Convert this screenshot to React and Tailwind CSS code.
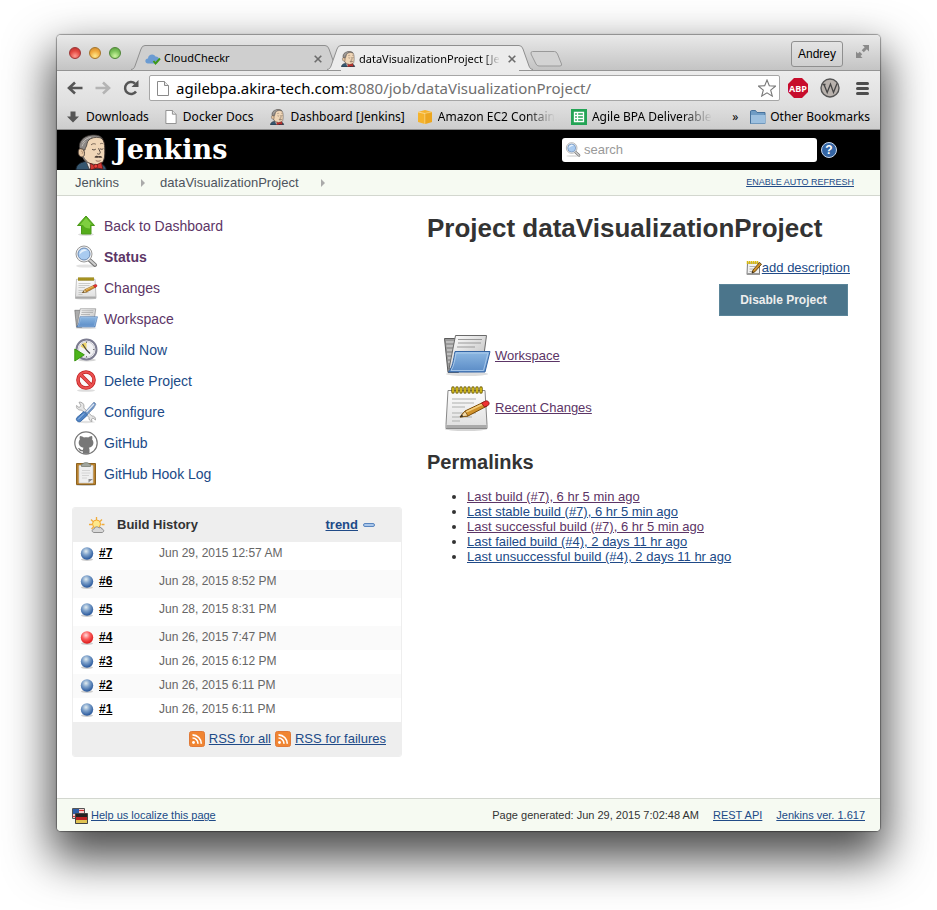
import React from 'react';

const linkBlue = 'text-[#204a87] underline';
const linkVisited = 'text-[#5c3566] underline';

function JenkinsHead({ className }) {
  return (
    <svg viewBox="0 0 36 38" className={className} aria-hidden="true">
      <path d="M1 38c0-5 4-8 10-9l13 1c5 1 9 4 9 8z" fill="#35566f" stroke="#141c24" strokeWidth="1" />
      <path d="M11 27l4 10 8-1 2-7z" fill="#f4f1ec" stroke="#3a2f2a" strokeWidth=".7" />
      <path d="M7 21C5 12 10 1.500 20 1.500c9 0 11.500 6 11.500 13 0 4 .5 9-1 13-1.500 4.500-6 5.500-11 4.500-7-1.500-11-4-12.500-11z" fill="#f0d6b7" stroke="#3a2f2a" strokeWidth="1" />
      <path d="M5 16C3 8 9 2 17 1.200c5-.6 10 .3 12.500 3.800-4-2-9-2-13 0-3 1.500-3.500 4-4 6.500-.3 2-1.500 2.500-2 5.500z" fill="#8b8785" stroke="#3b3532" strokeWidth=".8" />
      <path d="M8 9c2-3 5-5 9-5.500M7.500 13c1-3 2-4 3.500-5" fill="none" stroke="#c4bfbb" strokeWidth="1" />
      <path d="M6 15.500c-3.500-.5-3.500 7 0 8.500 3 1 4-1 4-3.500s-1-5-4-5z" fill="#e8c8a4" stroke="#3a2f2a" strokeWidth=".9" />
      <path d="M6.500 18c1.500 0 2 1.500 1 3" fill="none" stroke="#9b7b60" strokeWidth=".7" />
      <path d="M8.500 24c1 2.500 2.500 4.500 4.500 5.500" fill="none" stroke="#77716d" strokeWidth="1.600" />
      <path d="M17 11.500c1.500-1.500 3.500-1.500 5-.8M26.500 10.500c1-.8 2.500-.8 3.500 0" fill="none" stroke="#6e5d50" strokeWidth="1" />
      <path d="M18 16c1 1 3 1 4 0M26.500 15.500c1 .8 2.500.8 3.500 0M25 15c.5 2.500 2.500 4 1.500 5.500-.8 1-2 1-3 .2" fill="none" stroke="#3a2f2a" strokeWidth=".9" />
      <path d="M20.500 24.500c1.500-1.800 3-1.800 4.500-1 1.500-.6 3 0 4 1.200-1.500.6-3 .5-4 .1-1.500.6-3 .6-4.500-.3z" fill="#4a3c34" />
      <path d="M22 28c1.500 1 3.500 1 5 0" fill="none" stroke="#8b5a4b" strokeWidth=".9" />
      <path d="M16 31l5 2.500 7-3.500 1.500 7-6.500-1-6.500 2z" fill="#d33833" stroke="#5a1210" strokeWidth=".8" />
      <circle cx="22" cy="34" r="2" fill="#ef3d3a" stroke="#5a1210" strokeWidth=".6" />
    </svg>
  );
}

function PageIcon({ className }) {
  return (
    <svg viewBox="0 0 12 15" className={className} aria-hidden="true">
      <path d="M.5.5h7l4 4v10H.5z" fill="#fff" stroke="#8a8a8a" />
      <path d="M7.5.5v4h4" fill="#e8e8e8" stroke="#8a8a8a" />
    </svg>
  );
}

function Magnifier({ className }) {
  return (
    <svg viewBox="0 0 24 24" className={className} aria-hidden="true">
      <ellipse cx="12" cy="21" rx="10" ry="1.600" fill="#e2e2e2" />
      <path d="M15 14.500l6 5.500" stroke="#777" strokeWidth="4" strokeLinecap="round" />
      <path d="M16 15.300l5 4.500" stroke="#cfcfcf" strokeWidth="2" strokeLinecap="round" />
      <circle cx="10" cy="9" r="8" fill="#f2f2f2" stroke="#999" />
      <circle cx="10" cy="9" r="6" fill="#a9cbf0" stroke="#6b8bb5" />
      <path d="M5.500 9.500c0-4.500 5-7 7.500-4-3 .5-5.500 1.500-7.500 4z" fill="#e6f1fc" />
    </svg>
  );
}

function Notepad({ className }) {
  return (
    <svg viewBox="0 0 48 48" className={className} aria-hidden="true">
      <defs>
        <linearGradient id="paper" x1="0" y1="0" x2="0" y2="1">
          <stop offset="0" stopColor="#fdfdfd" />
          <stop offset="1" stopColor="#dedede" />
        </linearGradient>
      </defs>
      <ellipse cx="23" cy="45" rx="21" ry="2" fill="#d5d5d5" />
      <path d="M5 6.500h37l2 34v4H3v-4z" fill="url(#paper)" stroke="#888" strokeLinejoin="round" />
      <path d="M3.500 41h40v3h-40z" fill="#aaa" />
      <path d="M9 15h24M9 19h22M9 23h13M9 29h24M9 33h20M9 37h8" stroke="#aeb0ad" strokeWidth="1.200" />
      <path d="M10 4v4M14 4v4M18 4v4M22 4v4M26 4v4M30 4v4M34 4v4M38 4v4" stroke="#6b5a00" strokeWidth="3.400" strokeLinecap="round" />
      <path d="M10 4v4M14 4v4M18 4v4M22 4v4M26 4v4M30 4v4M34 4v4M38 4v4" stroke="#e3c81c" strokeWidth="1.600" strokeLinecap="round" />
      <path d="M17 33l5-6 19-9 3 4-19 10z" fill="#d0922b" stroke="#7a4b06" strokeLinejoin="round" />
      <path d="M23 28l19-9" stroke="#f4cf7e" strokeWidth="1.400" />
      <path d="M17 33l5-6 3 5z" fill="#f1d9a8" stroke="#7a4b06" strokeWidth=".8" />
      <path d="M17 33l2-2.500 1.200 2z" fill="#222" />
      <path d="M38.500 19l4-2c3-1 5 3 2.500 4.500L41.500 23z" fill="#e33" stroke="#811" strokeWidth=".8" />
    </svg>
  );
}

function EditNote() {
  return (
    <svg viewBox="0 0 16 16" className="size-4" aria-hidden="true">
      <path d="M1.500 3h12v11.500H1z" fill="#f1f1f1" stroke="#7d7d7d" />
      <path d="M1 13h12.500v2H1z" fill="#999" />
      <path d="M3.500 6.500h6M3.500 9h4M3.500 11.500h3" stroke="#b0b0b0" />
      <path d="M1.500 1v3M3.500 1v3M5.500 1v3M7.500 1v3M9.500 1v3M11.500 1v3" stroke="#d8ba10" strokeWidth="1.500" />
      <path d="M6 13l1-3 6.500-7.500 2 1.700L9 11.700z" fill="#d0922b" stroke="#5e3c08" strokeWidth=".9" strokeLinejoin="round" />
      <path d="M6 13l.6-1.800 1.200 1z" fill="#222" />
    </svg>
  );
}

function FolderOpen({ className }) {
  return (
    <svg viewBox="0 0 48 48" className={className} aria-hidden="true">
      <defs>
        <linearGradient id="folderFront" x1="0" y1="0" x2="0" y2="1">
          <stop offset="0" stopColor="#8db8e2" />
          <stop offset="1" stopColor="#5a8bc6" />
        </linearGradient>
        <linearGradient id="sheet" x1="0" y1="0" x2="1" y2="1">
          <stop offset="0" stopColor="#fff" />
          <stop offset="1" stopColor="#b8b8b8" />
        </linearGradient>
      </defs>
      <ellipse cx="24" cy="42" rx="21" ry="2" fill="#ddd" />
      <path d="M1.500 6.500h11l3 3v31H5z" fill="#9a9a9a" stroke="#5c5c5c" />
      <path d="M3 10h9M3.500 14h9M4 18h9M4 22h9M5 26h8M5 30h7" stroke="#c9c9c9" strokeWidth="1.500" />
      <path d="M12.500 3.500h31L40 30 6 37z" fill="url(#sheet)" stroke="#6a6a6a" strokeLinejoin="round" />
      <path d="M15 7.500h24M15 11h23M14 15h18" stroke="#999" strokeWidth="1.200" />
      <path d="M12 19.500h35L42 40H5.500c4-4 5-12 6.500-20.500z" fill="url(#folderFront)" stroke="#3465a4" strokeLinejoin="round" />
      <path d="M13 21h32l-4.500 17.500H8c3-5 4-11 5-17.500z" fill="none" stroke="#b5d2ef" strokeWidth=".8" />
    </svg>
  );
}

function UpArrow() {
  return (
    <svg viewBox="0 0 24 24" className="size-6" aria-hidden="true">
      <ellipse cx="12" cy="20.500" rx="8" ry="1.500" fill="#ddd" />
      <path d="M12 2l8.500 9.500H17v8.500H7.500v-8.500h-4z" fill="#56ad1c" stroke="#4c9a1a" strokeLinejoin="round" />
      <path d="M12 3.800l6 6.700h-2v4c-3 0-6-1-7-3.500H5.800z" fill="#7fce40" />
    </svg>
  );
}

function ClockPlay() {
  return (
    <svg viewBox="0 0 24 24" className="size-6" aria-hidden="true">
      <ellipse cx="13" cy="22" rx="9" ry="1.500" fill="#d5d5d5" />
      <circle cx="12.500" cy="11.500" r="10" fill="#fff" stroke="#7c7c90" strokeWidth="2" />
      <circle cx="12.500" cy="11.500" r="8" fill="#f2f2f4" stroke="#c9c9d2" />
      <path d="M12.500 12V4.500c-3 0-5 1.500-6 4z" fill="#edd46a" />
      <path d="M12.500 12L8.500 6M12.500 12l3.500 3.500" stroke="#444" strokeWidth="1.200" />
      <path d="M12.500 3.500v1.500M20.500 11.500H19M12.500 18v1.500" stroke="#777" />
      <path d="M.8 11l9.500 5.800L.8 23z" fill="#4db51a" stroke="#3a9410" strokeLinejoin="round" />
    </svg>
  );
}

function NoEntry() {
  return (
    <svg viewBox="0 0 24 24" className="size-6" aria-hidden="true">
      <ellipse cx="12" cy="21.500" rx="9" ry="1.300" fill="#ddd" />
      <circle cx="12" cy="11" r="8" fill="#fafafa" stroke="#c02020" strokeWidth="3.600" />
      <path d="M6.500 5.500l11 11" stroke="#c02020" strokeWidth="3.600" />
      <circle cx="12" cy="11" r="8" fill="none" stroke="#ea5050" strokeWidth="2.200" />
      <path d="M6.500 5.500l11 11" stroke="#ea5050" strokeWidth="2.200" />
    </svg>
  );
}

function Tools() {
  return (
    <svg viewBox="0 0 24 24" className="size-6" aria-hidden="true">
      <ellipse cx="12" cy="22" rx="9" ry="1.200" fill="#e2e2e2" />
      <path d="M5 2.200c2.500-.5 5 1.300 5 3.800L9.800 8l8 8c2.200-.3 4.200 1.500 3.700 4L19 18l-1.500 1 .5 2.500c-2.300-.3-3.300-2.200-3-4L7.500 10C4.500 10.500 2 8.500 2.500 5.500L5 7.500 7 5.800z" fill="#e6e6e6" stroke="#9a9a9a" strokeWidth=".8" strokeLinejoin="round" />
      <path d="M20 2l2 2-2.500 4.500-6 6-2.500-2.500 5.500-6z" fill="#6c93c6" stroke="#8097b5" strokeWidth=".8" />
      <path d="M20 4l-7.500 8" stroke="#dfe7f2" strokeWidth="1.200" />
      <path d="M10 11.500l3.500 3.500-7 6.500c-2.500 1-5.500-1.500-3.500-4z" fill="#4f83c4" stroke="#3768a6" strokeLinejoin="round" />
      <path d="M10 13.500l-6 6" stroke="#a5c5ea" />
    </svg>
  );
}

function Octocat() {
  return (
    <svg viewBox="0 0 24 24" className="size-6" aria-hidden="true">
      <circle cx="12" cy="12" r="11.200" fill="#fff" stroke="#777" strokeWidth="1.200" />
      <path d="M6 5c1.700 0 3 .8 4 1.500 1.300-.3 2.900-.3 4.200 0C15 5.800 16.400 5 18 5c.6 1.300.4 2.600.1 3.400 2.400 2.600 1.700 7.600-3.300 8.300.6.600.7 1.300.7 2v4H8.800v-2.400c-2.600.4-3.500-.9-4-2.100-.3-.6-.8-.8-.9-1.100 1.700-.6 2.500 1 3 1.500.5.500 1.300.5 2 .2 0-.8.200-1.500.6-2.100-5-.7-5.900-5.700-3.600-8.300C5.600 7.500 5.500 6.300 6 5z" fill="#777" />
    </svg>
  );
}

function Clipboard() {
  return (
    <svg viewBox="0 0 24 24" className="size-6" aria-hidden="true">
      <ellipse cx="12" cy="23" rx="10" ry="1" fill="#ccc" />
      <path d="M2.500 1.500h19v21h-19z" fill="#b9812d" stroke="#8d6320" strokeLinejoin="round" />
      <path d="M5 3.500h14V21H5z" fill="#efefef" stroke="#ccc" strokeWidth=".7" />
      <path d="M8 8.500h8M7.500 11h9M8 13.500h7M8 16h5" stroke="#d4d4d4" />
      <path d="M14.500 20.500v-3.500H19z" fill="#8b8b8b" />
      <path d="M7.500 4.500V2H9C9 .2 15 .2 15 2h1.500v2.500z" fill="#a2a69e" stroke="#7b8076" strokeWidth=".8" />
    </svg>
  );
}

function SunCloud() {
  return (
    <svg viewBox="0 0 16 16" className="size-4" aria-hidden="true">
      <path d="M7.500 0v3M2 2.500l2 2M13 2.500l-2 2M0 7.500h3M12.500 7.500h3M2.500 12l2-2" stroke="#f0ab3a" strokeWidth="1.300" />
      <circle cx="7.500" cy="7" r="4" fill="#fde88a" stroke="#f2a52c" />
      <path d="M5 15.500c-2.500-.3-2.500-3.400.2-3.500C5.500 9.800 8.500 9 10 11c1.300-1.200 3-.3 2.800 1 2.500.3 2.500 3.200.2 3.500z" fill="#d8d8d8" stroke="#858585" strokeWidth=".9" />
    </svg>
  );
}

function RssIcon() {
  return (
    <svg viewBox="0 0 16 16" className="size-4 shrink-0" aria-hidden="true">
      <rect x=".5" y=".5" width="15" height="15" rx="2" fill="#f08532" stroke="#e07a38" />
      <circle cx="4.500" cy="11.500" r="1.400" fill="#fff" />
      <path d="M3.500 7a5.500 5.500 0 0 1 5.500 5.800M3.500 3.800a9 9 0 0 1 8.800 9" fill="none" stroke="#fff" strokeWidth="1.700" />
    </svg>
  );
}

function Ball({ failed }) {
  return (
    <svg viewBox="0 0 16 16" className="size-4" role="img" aria-label={failed ? 'Failed' : 'Success'}>
      <defs>
        <radialGradient id="ballBlue" cx=".42" cy=".32" r=".65">
          <stop offset="0" stopColor="#e3edf0" />
          <stop offset=".45" stopColor="#7fa2cb" />
          <stop offset="1" stopColor="#2c5b9e" />
        </radialGradient>
        <radialGradient id="ballRed" cx=".42" cy=".32" r=".65">
          <stop offset="0" stopColor="#ffdada" />
          <stop offset=".5" stopColor="#fb5c5c" />
          <stop offset="1" stopColor="#dd1c1c" />
        </radialGradient>
      </defs>
      <ellipse cx="8" cy="13.500" rx="6" ry="1.500" fill="#ccc" />
      <circle cx="8" cy="7.500" r="6.200" fill={failed ? 'url(#ballRed)' : 'url(#ballBlue)'} />
    </svg>
  );
}

function CloudIcon() {
  return (
    <svg viewBox="0 0 16 12" className="h-3 w-4 shrink-0" aria-hidden="true">
      <path d="M3 10.500c-3.500-.3-3.500-5 0-5C3 1 9 0 10.500 3.500c3 0 4 2.500 3.500 4l-2 3z" fill="#6b9bd2" />
      <path d="M8.500 8l2 2.500 4.500-5" fill="none" stroke="#3f9a16" strokeWidth="1.900" />
    </svg>
  );
}

function Tab({ icon, title, active, className, width }) {
  const fill = active ? '#ececec' : '#cfcfcf';
  return (
    <div className={`flex h-[25px] text-[11px] ${className}`}>
      <svg viewBox="0 0 14 25" className="h-[25px] w-[14px] shrink-0" aria-hidden="true">
        <path d="M0 25C3 24 3 23 4 21L10 4Q11 .5 14 .5V25z" fill={fill} />
        <path d="M0 24.500C3 24 3 23 4 21L10 4Q11 .5 14 .5" fill="none" stroke="#8f8f8f" />
      </svg>
      <div className={`flex items-center border-t border-[#8f8f8f] pt-px ${active ? 'bg-[#ececec]' : 'bg-[#cfcfcf]'} ${width}`}>
        {icon}
        <span className={`ml-[3px] whitespace-nowrap ${active ? '[mask-image:linear-gradient(to_right,black_88%,transparent)]' : ''}`}>{title}</span>
        <button type="button" aria-label="Close tab" className="ml-auto p-[3px]">
          <svg viewBox="0 0 8 8" className="size-2" aria-hidden="true"><path d="M.7.7l6.600 6.600M7.300.7L.7 7.300" stroke="#6c6c6c" strokeWidth="1.600" /></svg>
        </button>
      </div>
      <svg viewBox="0 0 14 25" className="h-[25px] w-[14px] shrink-0" aria-hidden="true">
        <path d="M14 25C11 24 11 23 10 21L4 4Q3 .5 0 .5V25z" fill={fill} />
        <path d="M14 24.500C11 24 11 23 10 21L4 4Q3 .5 0 .5" fill="none" stroke="#8f8f8f" />
      </svg>
    </div>
  );
}

function TitleBar() {
  return (
    <div className="flex h-9 items-end rounded-t-[4px] border-b border-[#949494] bg-linear-to-b from-[#e9e9e9] to-[#c4c4c4] pl-3 pr-[10px] text-xs">
      <div className="flex gap-2 self-center">
        <button type="button" aria-label="Close" className="size-3 rounded-full border border-[#9c3535] bg-[radial-gradient(circle_at_50%_80%,#ff9a90,#e2463f_55%,#b53030)]" />
        <button type="button" aria-label="Minimize" className="size-3 rounded-full border border-[#a5752a] bg-[radial-gradient(circle_at_50%_80%,#ffe98c,#f1a93c_55%,#c8862e)]" />
        <button type="button" aria-label="Zoom" className="size-3 rounded-full border border-[#4f8537] bg-[radial-gradient(circle_at_50%_80%,#cdf5a0,#7cc25a_55%,#55993c)]" />
      </div>
      <Tab icon={<CloudIcon />} title="CloudCheckr" className="ml-[10px]" width="w-[180px]" />
      <Tab active icon={<JenkinsHead className="h-4 w-[15px] shrink-0" />} title="dataVisualizationProject [Je" className="relative -mb-px -ml-3 h-[26px]" width="w-[178px]" />
      <button type="button" aria-label="New tab" className="-ml-1 mb-[2px]">
        <svg viewBox="0 0 34 18" className="h-[18px] w-[34px]" aria-hidden="true">
          <path d="M3.500 1.500h22q2 0 3 2.500l4 10q.500 2-1.500 2H10q-2 0-3-2L2 4q-.500-2.500 1.500-2.500z" fill="#d3d3d3" stroke="#999" />
        </svg>
      </button>
      <button type="button" className="mb-[3px] ml-auto h-[26px] rounded-[3px] border border-[#8f8f8f] bg-linear-to-b from-[#e4e4e4] to-[#cfcfcf] px-[6px] font-['Liberation_Sans',sans-serif]">Andrey</button>
      <button type="button" aria-label="Full screen" className="mb-[11px] ml-3">
        <svg viewBox="0 0 15 15" className="size-[15px]" aria-hidden="true">
          <path d="M7.500 1H14v6.500l-2.200-2.200-3 3-2.100-2.100 3-3zM1 7.500l2 2 1.700-1.700 2.500 2.500L5.500 12l2 2H1z" fill="#8a8a8a" />
        </svg>
      </button>
    </div>
  );
}

function Toolbar() {
  return (
    <div className="flex h-[34px] items-center bg-linear-to-b from-[#ececec] to-[#dfdfdf] px-[10px]">
      <button type="button" aria-label="Back"><svg viewBox="0 0 16 14" className="h-[14px] w-4"><path d="M8 1.500L2 7l6 5.500M2 7h13.500" fill="none" stroke="#555" strokeWidth="2.600" /></svg></button>
      <button type="button" aria-label="Forward" className="ml-3"><svg viewBox="0 0 16 14" className="h-[14px] w-4"><path d="M8 1.500L14 7l-6 5.500M14 7H.500" fill="none" stroke="#b4b4b4" strokeWidth="2.600" /></svg></button>
      <button type="button" aria-label="Reload" className="ml-3"><svg viewBox="0 0 16 16" className="size-4"><path d="M13 11.500A6 6 0 1 1 12 3.500" fill="none" stroke="#555" strokeWidth="2.500" /><path d="M15.500 0v7h-7z" fill="#555" /></svg></button>
      <div className="ml-[10px] flex h-[26px] flex-1 items-center rounded-[2px] border border-[#a6a6a6] bg-white pl-[7px] pr-[3px] text-[15px]">
        <PageIcon className="h-[15px] w-3 shrink-0" />
        <div className="ml-[7px] flex-1 whitespace-nowrap text-[#6f6f6f]" role="textbox" aria-label="Address"><span className="text-black">agilebpa.akira-tech.com</span>:8080/job/dataVisualizationProject/</div>
        <button type="button" aria-label="Bookmark this page"><svg viewBox="0 0 18 18" className="size-[18px]"><path d="M9 1l2.300 5.700 6.200.4-4.800 4 1.600 6L9 13.800l-5.300 3.300 1.600-6-4.800-4 6.200-.4z" fill="#fff" stroke="#777" strokeWidth="1.100" /></svg></button>
      </div>
      <button type="button" aria-label="AdBlock Plus" className="ml-2 flex size-[20px] items-center justify-center bg-[#c70d2c] font-['Open_Sans',sans-serif] text-[9px] leading-none font-bold text-white [clip-path:polygon(30%_0,70%_0,100%_30%,100%_70%,70%_100%,30%_100%,0_70%,0_30%)]">ABP</button>
      <button type="button" aria-label="Web developer" className="ml-3"><svg viewBox="0 0 20 20" className="size-5"><circle cx="10" cy="10" r="9" fill="#b9b2ad" stroke="#555" strokeWidth="1.400" /><path d="M2.500 6.500h3M4 6.500l3.200 8 3.300-8.500 3 8.500 3.500-9" fill="none" stroke="#444" strokeWidth="1.300" /></svg></button>
      <button type="button" aria-label="Menu" className="ml-4 mr-px flex flex-col gap-[2px]">
        <span className="h-[3px] w-[13px] rounded-xs bg-[#4d4d4d]" />
        <span className="h-[3px] w-[13px] rounded-xs bg-[#4d4d4d]" />
        <span className="h-[3px] w-[13px] rounded-xs bg-[#4d4d4d]" />
      </button>
    </div>
  );
}

function Bookmark({ icon, label, className = '', fade = '' }) {
  return (
    <a href="#" className={`flex items-center whitespace-nowrap ${className}`}>
      {icon}
      <span className={fade}>{label}</span>
    </a>
  );
}

function BookmarkBar() {
  return (
    <nav aria-label="Bookmarks" className="flex h-[25px] items-center border-b border-[#8d8d8d] bg-linear-to-b from-[#dfdfdf] to-[#cdcdcd] px-[10px] text-xs">
      <Bookmark className="gap-[7px]" label="Downloads" icon={<svg viewBox="0 0 12 12" className="size-3"><path d="M3.500.500h5v5H12L6 11.500 0 5.500h3.500z" fill="#555" /></svg>} />
      <Bookmark className="ml-4 gap-[6px]" label="Docker Docs" icon={<PageIcon className="h-[14px] w-3" />} />
      <Bookmark className="ml-[17px] gap-[5px]" label="Dashboard [Jenkins]" icon={<JenkinsHead className="h-4 w-[15px]" />} />
      <Bookmark
        className="ml-[13px] gap-[6px]"
        label="Amazon EC2 Contain"
        fade="[mask-image:linear-gradient(to_right,black_75%,transparent)]"
        icon={<svg viewBox="0 0 14 14" className="size-[14px]"><path d="M0 2l7-2 7 2v10l-7 2-7-2z" fill="#f5b32c" /><path d="M0 2l7 1.500L14 2M7 3.500V14" fill="none" stroke="#fbd98c" /><path d="M7 3.500L14 2v10l-7 2z" fill="#e39a12" opacity=".5" /></svg>}
      />
      <Bookmark
        className="ml-4 gap-[5px]"
        label="Agile BPA Deliverable"
        fade="[mask-image:linear-gradient(to_right,black_75%,transparent)]"
        icon={<svg viewBox="0 0 16 16" className="size-4"><path d="M0 0h16v16H0z" fill="#23a455" /><path d="M3.500 3.500h9v9h-9zM3.500 6.500h9M3.500 9.500h9M6.500 3.500v9" fill="none" stroke="#fff" strokeWidth="1.300" /></svg>}
      />
      <button type="button" aria-label="More bookmarks" className="ml-auto mr-3">»</button>
      <Bookmark
        className="gap-1"
        label="Other Bookmarks"
        icon={<svg viewBox="0 0 16 14" className="h-[14px] w-4"><path d="M.500 2q0-1.500 1-1.500h4l1.500 2h8v11H.500z" fill="#6f9cc4" stroke="#47729c" /><path d="M1 5h14.500v8.500H1z" fill="#9dc0df" /></svg>}
      />
    </nav>
  );
}

function Header() {
  return (
    <header className="flex h-10 items-center bg-black pl-[18px] pr-[43px]">
      <a href="#" className="flex h-10 items-end text-white">
        <JenkinsHead className="h-9 w-[34px]" />
        <span className="ml-[5px] self-center font-['DejaVu_Serif',serif] text-[27px] leading-9 font-bold">Jenkins</span>
      </a>
      <label className="ml-auto flex h-6 w-[255px] items-center rounded-[3px] bg-white pl-[3px] text-[13px]">
        <Magnifier className="size-4" />
        <input type="search" placeholder="search" aria-label="search" className="ml-[3px] min-w-0 flex-1 bg-transparent text-black outline-none placeholder:text-[#999]" />
      </label>
      <a href="#" aria-label="Help" className="ml-1 flex size-4 items-center justify-center rounded-full border border-[#c8d8ee] bg-[#3465a4] text-xs leading-none font-bold text-white">?</a>
    </header>
  );
}

function Breadcrumbs() {
  return (
    <nav aria-label="Breadcrumb" className="flex h-[26px] items-center border-b border-[#d3d7cf] bg-[#f6faf2] pl-[18px] pr-[26px] text-[13px] text-[#4d545d]">
      <a href="#">Jenkins</a>
      <svg viewBox="0 0 4 8" className="ml-[22px] mr-[15px] h-2 w-1"><path d="M0 0l4 4-4 4z" fill="#aaa" /></svg>
      <a href="#">dataVisualizationProject</a>
      <svg viewBox="0 0 4 8" className="ml-[22px] h-2 w-1"><path d="M0 0l4 4-4 4z" fill="#aaa" /></svg>
      <a href="#" className={`ml-auto text-[9px] ${linkBlue}`}>ENABLE AUTO REFRESH</a>
    </nav>
  );
}

const tasks = [
  { label: 'Back to Dashboard', icon: <UpArrow />, visited: true },
  { label: 'Status', icon: <Magnifier className="size-6" />, visited: true, current: true },
  { label: 'Changes', icon: <Notepad className="size-6" />, visited: true },
  { label: 'Workspace', icon: <FolderOpen className="size-6" />, visited: true },
  { label: 'Build Now', icon: <ClockPlay /> },
  { label: 'Delete Project', icon: <NoEntry /> },
  { label: 'Configure', icon: <Tools /> },
  { label: 'GitHub', icon: <Octocat /> },
  { label: 'GitHub Hook Log', icon: <Clipboard /> },
];

const builds = [
  { id: '#7', date: 'Jun 29, 2015 12:57 AM', height: 'h-7' },
  { id: '#6', date: 'Jun 28, 2015 8:52 PM', height: 'h-7' },
  { id: '#5', date: 'Jun 28, 2015 8:31 PM', height: 'h-7' },
  { id: '#4', date: 'Jun 26, 2015 7:47 PM', height: 'h-6', failed: true },
  { id: '#3', date: 'Jun 26, 2015 6:12 PM', height: 'h-6' },
  { id: '#2', date: 'Jun 26, 2015 6:11 PM', height: 'h-6' },
  { id: '#1', date: 'Jun 26, 2015 6:11 PM', height: 'h-6' },
];

function BuildHistory() {
  return (
    <section className="mt-[18px] overflow-hidden rounded-[3px] border border-[#eee] text-[13px]">
      <div className="flex h-[34px] items-center bg-[#eee] pl-4 pr-[26px]">
        <SunCloud />
        <h2 className="ml-3 font-bold text-[#333]">Build History</h2>
        <a href="#" className={`ml-auto font-bold ${linkBlue}`}>trend</a>
        <button type="button" aria-label="Collapse" className="ml-[5px] h-1 w-3 rounded-xs border border-[#5a86bf] bg-[#a9c6ea]" />
      </div>
      <table className="w-full table-fixed border-collapse text-xs">
        <tbody>
          {builds.map((b) => (
            <tr key={b.id} className={`${b.height} even:bg-[#fafafa]`}>
              <td className="w-[26px] pl-[6px] pt-1 align-top"><Ball failed={b.failed} /></td>
              <td className="w-[60px] pt-[3px] align-top font-bold leading-4"><a href="#" className="text-black underline">{b.id}</a></td>
              <td className="pt-[3px] align-top leading-4 text-[#666]">{b.date}</td>
            </tr>
          ))}
        </tbody>
      </table>
      <div className="flex h-[34px] items-center justify-end gap-1 bg-[#eee] pr-[15px]">
        <RssIcon />
        <a href="#" className={linkBlue}>RSS for all</a>
        <RssIcon />
        <a href="#" className={linkBlue}>RSS for failures</a>
      </div>
    </section>
  );
}

function SidePanel() {
  return (
    <aside className="w-[330px] shrink-0">
      <ul>
        {tasks.map((t) => (
          <li key={t.label}>
            <a href="#" className={`flex h-[31px] items-center gap-[6px] pl-[2px] text-sm ${t.visited ? 'text-[#5c3566]' : 'text-[#204a87]'} ${t.current ? 'font-bold' : ''}`}>
              {t.icon}
              {t.label}
            </a>
          </li>
        ))}
      </ul>
      <BuildHistory />
    </aside>
  );
}

const permalinks = [
  { label: 'Last build (#7), 6 hr 5 min ago', visited: true },
  { label: 'Last stable build (#7), 6 hr 5 min ago' },
  { label: 'Last successful build (#7), 6 hr 5 min ago', visited: true },
  { label: 'Last failed build (#4), 2 days 11 hr ago' },
  { label: 'Last unsuccessful build (#4), 2 days 11 hr ago' },
];

function MainPanel() {
  return (
    <main className="min-w-0 flex-1 text-[13px]">
      <h1 className="text-[26px] leading-9 font-bold">Project dataVisualizationProject</h1>
      <div className="mt-3 flex flex-col items-end">
        <a href="#" className={`flex h-5 items-center ${linkBlue}`}>
          <EditNote />
          add description
        </a>
        <button type="button" className="mr-[2px] mt-[6px] h-8 w-[129px] border border-[#5b8599] bg-[#4b758b] text-xs font-bold text-[#eee]">Disable Project</button>
      </div>
      <div className="mt-4 flex flex-col gap-1 pl-4">
        <a href="#" className={`flex items-center gap-1 ${linkVisited}`}><FolderOpen className="size-12" />Workspace</a>
        <a href="#" className={`flex items-center gap-1 ${linkVisited}`}><Notepad className="size-12" />Recent Changes</a>
      </div>
      <h2 className="mt-4 text-xl leading-7 font-bold">Permalinks</h2>
      <ul className="mt-[13px] list-disc pl-10 leading-[15px]">
        {permalinks.map((p) => (
          <li key={p.label}><a href="#" className={p.visited ? linkVisited : linkBlue}>{p.label}</a></li>
        ))}
      </ul>
    </main>
  );
}

function Footer() {
  return (
    <footer className="flex h-[33px] items-center rounded-b-[4px] border-t border-[#d3d7cf] bg-[#f6faf2] px-[15px] pt-px text-[11px]">
      <a href="#" className={`flex items-center gap-[3px] ${linkBlue}`}>
        <svg viewBox="0 0 16 16" className="size-4" aria-hidden="true">
          <path d="M.500.500h12v10H.500z" fill="#fff" stroke="#555" />
          <path d="M1 2.500h11M1 5.500h11M1 8.500h11" stroke="#d33" strokeWidth="1.500" />
          <path d="M1 1h6v5H1z" fill="#2f5fa8" />
          <path d="M3.500 5.500h12v10h-12z" fill="#222" stroke="#444" />
          <path d="M4 9h11v3H4z" fill="#b22" />
          <path d="M4 12h11v3H4z" fill="#e0c352" />
        </svg>
        Help us localize this page
      </a>
      <span className="ml-auto">Page generated: Jun 29, 2015 7:02:48 AM</span>
      <a href="#" className={`ml-[14px] ${linkBlue}`}>REST API</a>
      <a href="#" className={`ml-[14px] ${linkBlue}`}>Jenkins ver. 1.617</a>
    </footer>
  );
}

export default function App() {
  return (
    <div className="min-h-screen bg-white px-[57px] pb-[78px] pt-[35px]">
      <div className="rounded-[4px] font-['Liberation_Sans',sans-serif] text-[#333] shadow-[0_0_1px_1px_rgba(0,0,0,0.35),0_22px_46px_6px_rgba(0,0,0,0.7)]">
        <div className="font-['Noto_Sans',sans-serif] text-black">
          <TitleBar />
          <Toolbar />
          <BookmarkBar />
        </div>
        <Header />
        <Breadcrumbs />
        <div className="flex gap-[25px] bg-white pb-[41px] pl-[15px] pr-[30px] pt-[14px]">
          <SidePanel />
          <MainPanel />
        </div>
        <Footer />
      </div>
    </div>
  );
}
